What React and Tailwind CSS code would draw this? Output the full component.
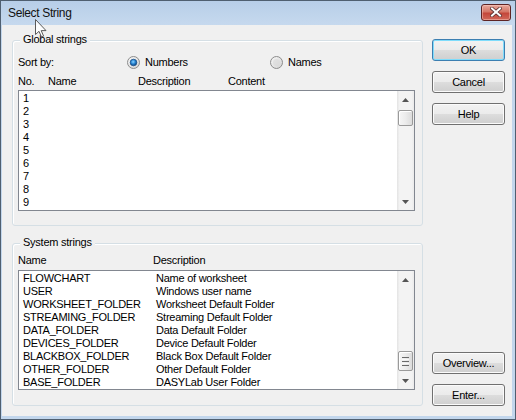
import React from "react";

const sysRows = [
  ["FLOWCHART", "Name of worksheet"],
  ["USER", "Windows user name"],
  ["WORKSHEET_FOLDER", "Worksheet Default Folder"],
  ["STREAMING_FOLDER", "Streaming Default Folder"],
  ["DATA_FOLDER", "Data Default Folder"],
  ["DEVICES_FOLDER", "Device Default Folder"],
  ["BLACKBOX_FOLDER", "Black Box Default Folder"],
  ["OTHER_FOLDER", "Other Default Folder"],
  ["BASE_FOLDER", "DASYLab User Folder"],
];

function Arrow({ down }) {
  return (
    <svg width="7" height="4" viewBox="0 0 7 4">
      {down ? (
        <path d="M0 0 L7 0 L3.5 4 Z" fill="#555" />
      ) : (
        <path d="M0 4 L7 4 L3.5 0 Z" fill="#555" />
      )}
    </svg>
  );
}

function Thumb({ h, grip }) {
  return (
    <div
      className="mx-[1px] rounded-[2px] border border-[#9a9a9a] bg-[linear-gradient(to_right,#f6f6f6,#ececec_50%,#dcdcdc)] shadow-[inset_1px_1px_0_#ffffff] flex flex-col items-center justify-center gap-[1px]"
      style={{ height: h }}
    >
      {grip && (
        <>
          <div className="w-[7px] h-[1px] bg-[#6a6a6a]" />
          <div className="w-[7px] h-[1px] bg-[#f8f8f8]" />
          <div className="w-[7px] h-[1px] bg-[#6a6a6a]" />
          <div className="w-[7px] h-[1px] bg-[#f8f8f8]" />
          <div className="w-[7px] h-[1px] bg-[#6a6a6a]" />
        </>
      )}
    </div>
  );
}

function ScrollBar({ top }) {
  return (
    <div className="w-[17px] h-full flex flex-col bg-[linear-gradient(to_right,#e3e3e3,#f3f3f3_15%,#f3f3f3_85%,#ebebeb)]">
      <div className="h-[17px] flex items-center justify-center shrink-0">
        <Arrow />
      </div>
      {top ? (
        <>
          <div className="mt-[2px]">
            <Thumb h={16} />
          </div>
          <div className="flex-1" />
        </>
      ) : (
        <>
          <div className="flex-1" />
          <div className="mb-[1px]">
            <Thumb h={20} grip />
          </div>
        </>
      )}
      <div className="h-[17px] flex items-center justify-center shrink-0">
        <Arrow down />
      </div>
    </div>
  );
}

function Radio({ checked, id }) {
  return (
    <svg width="13" height="13" viewBox="0 0 13 13">
      <defs>
        <linearGradient id={id + "o"} x1="0" y1="0" x2="1" y2="1">
          <stop offset="0" stopColor="#f8f8f8" />
          <stop offset="1" stopColor="#d2d2d2" />
        </linearGradient>
        <radialGradient id={id + "d"} cx="0.45" cy="0.4" r="0.6">
          <stop offset="0" stopColor="#8fd3ff" />
          <stop offset="0.5" stopColor="#2a8ad8" />
          <stop offset="1" stopColor="#0b3f78" />
        </radialGradient>
      </defs>
      <circle cx="6.5" cy="6.5" r="6" fill={`url(#${id}o)`} stroke="#8c8c8c" />
      {checked ? (
        <circle cx="6.5" cy="6.5" r="3.3" fill={`url(#${id}d)`} stroke="#1d5690" strokeWidth="0.8" />
      ) : (
        <circle cx="6.5" cy="6.5" r="3.5" fill="#d9d9d9" opacity="0.6" />
      )}
    </svg>
  );
}

function Button({ children, def }) {
  return (
    <div
      className={
        "h-[22px] w-[73px] rounded-[3px] border flex items-center justify-center bg-[linear-gradient(to_bottom,#f2f2f2_0%,#ebebeb_50%,#dddddd_50%,#cfcfcf_100%)] " +
        (def
          ? "border-[#3c7fb1] shadow-[inset_0_0_0_1px_#7fdcfb]"
          : "border-[#707070] shadow-[inset_0_0_0_1px_#fbfbfb]")
      }
    >
      {children}
    </div>
  );
}

export default function App() {
  return (
    <div className="w-[516px] h-[420px] relative overflow-hidden border border-[#4f5f70] bg-[#c2d6ec] flex flex-col font-['Liberation_Sans',Arial,sans-serif] text-[11px] leading-[13px] tracking-[-0.25px] text-black">
      {/* title bar */}
      <div className="h-[24px] shrink-0 flex items-center pl-[7px] pr-[4px] bg-[linear-gradient(to_bottom,#b7cee8,#c6d9ee)]">
        <span className="text-[12px] tracking-[-0.35px] text-[#111]">Select String</span>
        <div className="ml-auto mb-[2px] w-[30px] h-[17px] rounded-[3px] border border-[#5e2424] bg-[linear-gradient(to_bottom,#e8a99d,#d47666_45%,#c4473a_55%,#d0685a)] shadow-[inset_0_0_0_1px_rgba(255,210,200,0.45)] flex items-center justify-center">
          <svg width="12" height="10" viewBox="0 0 12 10">
            <path d="M2 1.5 L10 8.5 M10 1.5 L2 8.5" stroke="#5a3030" strokeWidth="3.6" strokeLinecap="square" />
            <path d="M2 1.5 L10 8.5 M10 1.5 L2 8.5" stroke="#ffffff" strokeWidth="2" strokeLinecap="square" />
          </svg>
        </div>
      </div>

      {/* body */}
      <div className="ml-[1px] mr-[3px] mb-[3px] flex-1 flex bg-[#f0f0f0] pl-[10px]">
        {/* left column */}
        <div className="w-[411px] pt-[15px] flex flex-col">
          {/* Global strings */}
          <div className="relative h-[186px] rounded-[3px] border border-[#d5dfe5] shadow-[inset_1px_1px_0_#ffffff] pl-[5px] pt-[14px]">
            <div className="absolute left-[7px] top-[-8px] px-[3px] bg-[#f0f0f0]">Global strings</div>
            <div className="h-[15px] flex items-center">
              <div className="w-[109px]">Sort by:</div>
              <div className="w-[143px] flex items-center gap-[5px]">
                <Radio checked id="r1" />
                <span>Numbers</span>
              </div>
              <div className="flex items-center gap-[5px]">
                <Radio id="r2" />
                <span>Names</span>
              </div>
            </div>
            <div className="mt-[5px] h-[13px] flex">
              <div className="w-[30px]">No.</div>
              <div className="w-[90px]">Name</div>
              <div className="w-[90px]">Description</div>
              <div>Content</div>
            </div>
            <div className="mt-[2px] h-[121px] w-[397px] border border-[#828790] bg-white flex">
              <div className="flex-1 pl-[4px] pt-[1px] overflow-hidden">
                {[1, 2, 3, 4, 5, 6, 7, 8, 9].map((n) => (
                  <div key={n} className="h-[13px]">
                    {n}
                  </div>
                ))}
              </div>
              <ScrollBar top />
            </div>
          </div>

          {/* System strings */}
          <div className="relative mt-[17px] h-[163px] rounded-[3px] border border-[#d5dfe5] shadow-[inset_1px_1px_0_#ffffff] pl-[5px] pt-[10px]">
            <div className="absolute left-[7px] top-[-8px] px-[3px] bg-[#f0f0f0]">System strings</div>
            <div className="h-[13px] flex">
              <div className="w-[135px]">Name</div>
              <div>Description</div>
            </div>
            <div className="mt-[3px] h-[120px] w-[397px] border border-[#828790] bg-white flex">
              <div className="flex-1 pl-[4px] pt-[1px] overflow-hidden">
                {sysRows.map(([a, b]) => (
                  <div key={a} className="h-[13px] flex">
                    <div className="w-[133px]">{a}</div>
                    <div>{b}</div>
                  </div>
                ))}
              </div>
              <ScrollBar />
            </div>
          </div>
        </div>

        {/* right column */}
        <div className="ml-[9px] pt-[14px] pb-[10px] flex flex-col">
          <Button def>OK</Button>
          <div className="mt-[10px]">
            <Button>Cancel</Button>
          </div>
          <div className="mt-[10px]">
            <Button>Help</Button>
          </div>
          <div className="flex-1" />
          <Button>Overview...</Button>
          <div className="mt-[10px]">
            <Button>Enter...</Button>
          </div>
        </div>
      </div>

      {/* mouse cursor */}
      <svg className="absolute left-[34px] top-[18px]" width="13" height="20" viewBox="0 0 13 20">
        <path
          d="M0.5 0.5 L0.5 15.5 L4 12.3 L6.5 18 L8.6 17.1 L6.2 11.6 L11 11.6 Z"
          fill="rgba(255,255,255,0.85)"
          stroke="#5a5a5a"
          strokeWidth="1"
          strokeLinejoin="miter"
        />
      </svg>
    </div>
  );
}
